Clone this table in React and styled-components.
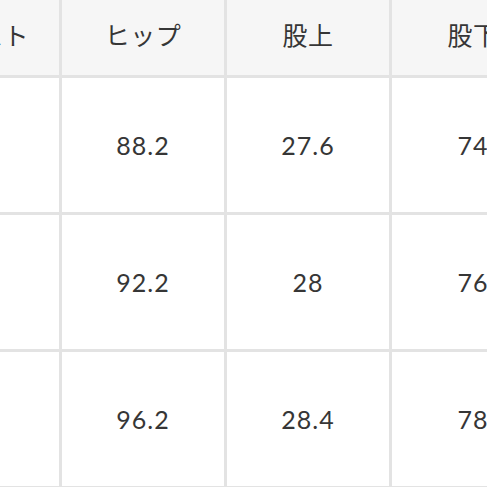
import React from "react";
import styled, { createGlobalStyle } from "styled-components";

const GlobalStyle = createGlobalStyle`
  html, body {
    margin: 0;
    padding: 0;
    background: #ffffff;
  }
  body {
    font-family: "Lato", "Noto Sans CJK JP", sans-serif;
    color: #333333;
  }
`;

const Viewport = styled.div`
  width: 487px;
  height: 487px;
  overflow: hidden;
  background: #ffffff;
`;

// the table is wider and taller than the window: it runs past every edge
const SizeTable = styled.div`
  display: grid;
  grid-template-columns: repeat(${(p) => p.cols}, 162px);
  grid-template-rows: 83px repeat(${(p) => p.rows}, 134px) 134px;
  gap: 3px;
  padding: 0 3px;
  margin: -8px 0 0 -106px;
  width: max-content;
  background: #e3e3e3;
`;

const Cell = styled.div`
  display: flex;
  align-items: center;
  justify-content: center;
  background: ${(p) => (p.head ? "#f6f6f6" : "#ffffff")};
  font-size: 25px;
  letter-spacing: ${(p) => (p.head ? "0.5px" : "1px")};
  color: #363636;
  white-space: nowrap;
`;

const columns = ["ウエスト", "ヒップ", "股上", "股下"];

const rows = [
  ["66", "88.2", "27.6", "74"],
  ["70", "92.2", "28", "76"],
  ["74", "96.2", "28.4", "78"],
];

export default function App() {
  return (
    <Viewport>
      <GlobalStyle />
      <SizeTable cols={columns.length} rows={rows.length}>
        {columns.map((c) => (
          <Cell head key={c}>
            {c}
          </Cell>
        ))}
        {rows.map((r, i) =>
          r.map((v, j) => <Cell key={i + "-" + j}>{v}</Cell>)
        )}
        {columns.map((c) => (
          <Cell key={"next-" + c} />
        ))}
      </SizeTable>
    </Viewport>
  );
}
